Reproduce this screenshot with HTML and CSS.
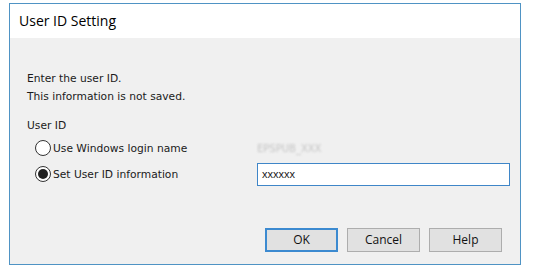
FILE: index.html
```html
<!DOCTYPE html>
<html>
<head>
<meta charset="utf-8">
<link rel="stylesheet" href="styles.css">
</head>
<body>
<div class="window">
  <div class="titlebar">User ID Setting</div>
  <div class="content">
    <div class="intro">
      <div class="line">Enter the user ID.</div>
      <div class="line">This information is not saved.</div>
    </div>
    <div class="group-label">User ID</div>
    <div class="row row1">
      <label class="radio"><span class="circle"></span><span>Use Windows login name</span></label>
      <span class="login">EPSPUB_XXX</span>
    </div>
    <div class="row row2">
      <label class="radio"><span class="circle checked"></span><span>Set User ID information</span></label>
      <div class="input">xxxxxx</div>
    </div>
    <div class="buttons">
      <div class="btn default">OK</div>
      <div class="btn">Cancel</div>
      <div class="btn">Help</div>
    </div>
  </div>
</div>
</body>
</html>
```
FILE: styles.css
```css
html, body {
  margin: 0;
  padding: 0;
  background: #ffffff;
}
body {
  padding: 3px 0 0 9px;
  font-family: "DejaVu Sans", sans-serif;
  font-size: 10.7px;
  color: #1a1a1a;
}
.window {
  width: 510px;
  height: 260px;
  border: 1px solid #4f93c4;
  display: flex;
  flex-direction: column;
  background: #f0f0f0;
}
.titlebar {
  height: 34px;
  background: #ffffff;
  font-family: "Open Sans", sans-serif;
  font-size: 14px;
  line-height: 34px;
  padding-left: 9px;
  color: #000;
}
.content {
  flex: 1;
  padding: 32px 0 0 17px;
  display: flex;
  flex-direction: column;
}
.intro .line {
  height: 18px;
  line-height: 18px;
}
.group-label {
  margin-top: 11px;
  height: 18px;
  line-height: 18px;
}
.row {
  display: flex;
  align-items: center;
  height: 24px;
}
.row1 {
  margin-top: 1px;
}
.row2 {
  margin-top: 2px;
}
.radio {
  display: flex;
  align-items: center;
  gap: 2px;
  width: 222px;
  padding-left: 8px;
}
.circle {
  border: 1px solid #333;
  border-radius: 50%;
  background: #fff;
  box-sizing: border-box;
  width: 16px;
  height: 16px;
  display: flex;
  align-items: center;
  justify-content: center;
}
.circle.checked::after {
  content: "";
  width: 10px;
  height: 10px;
  border-radius: 50%;
  background: #222;
}
.login {
  color: #c4c4c4;
  filter: blur(0.9px);
  font-size: 10px;
}
.input {
  width: 253px;
  height: 23px;
  box-sizing: border-box;
  border: 1px solid #3f86c8;
  background: #fff;
  line-height: 21px;
  padding-left: 4px;
  font-family: "Liberation Sans", sans-serif;
  font-size: 11px;
}
.buttons {
  margin-top: 42px;
  display: flex;
  gap: 9px;
  padding-left: 238px;
}
.btn {
  width: 73px;
  height: 24px;
  box-sizing: border-box;
  border: 1px solid #adadad;
  background: #e1e1e1;
  text-align: center;
  line-height: 22px;
  font-family: "Open Sans", sans-serif;
  font-size: 12px;
  color: #111;
}
.btn.default {
  border: 2px solid #3c8ad0;
  line-height: 20px;
}
```
